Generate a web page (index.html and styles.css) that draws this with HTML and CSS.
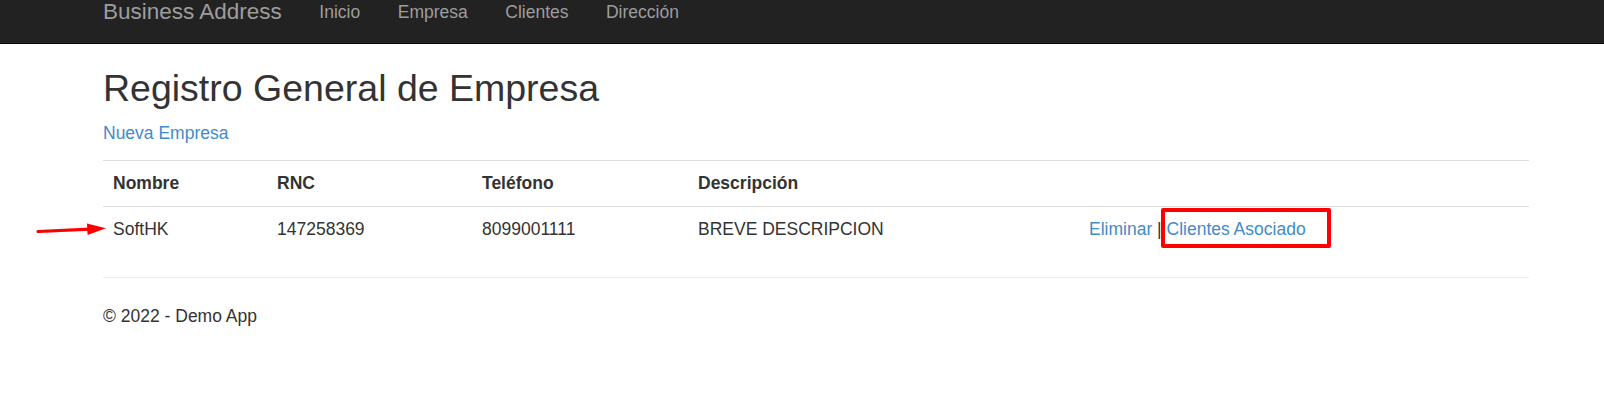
FILE: index.html
```html
<!DOCTYPE html>
<html lang="es">
<head>
<meta charset="utf-8">
<title>Registro General de Empresa - Demo App</title>
<link rel="stylesheet" href="styles.css">
</head>
<body>
<header class="navbar">
  <div class="nav-inner">
    <a class="brand" href="#">Business Address</a>
    <ul class="nav-links">
      <li><a href="#">Inicio</a></li>
      <li><a href="#">Empresa</a></li>
      <li><a href="#">Clientes</a></li>
      <li><a href="#">Dirección</a></li>
    </ul>
  </div>
</header>

<main class="body-content">
  <h2 class="page-title">Registro General de Empresa</h2>
  <p class="new-link"><a href="#">Nueva Empresa</a></p>

  <table class="table">
    <colgroup>
      <col class="c1"><col class="c2"><col class="c3"><col class="c4"><col class="c5">
    </colgroup>
    <tr>
      <th>Nombre</th>
      <th>RNC</th>
      <th>Teléfono</th>
      <th>Descripción</th>
      <th></th>
    </tr>
    <tr>
      <td>SoftHK</td>
      <td>147258369</td>
      <td>8099001111</td>
      <td>BREVE DESCRIPCION</td>
      <td><a href="#">Eliminar</a> | <a href="#">Clientes Asociado</a></td>
    </tr>
  </table>

  <hr class="footer-rule">
  <footer class="footer">
    <p>© 2022 - Demo App</p>
  </footer>
</main>

<svg class="annot-arrow" width="84" height="30" viewBox="0 0 84 30" aria-hidden="true">
  <path d="M8 16.5 L60 14.2" stroke="#f00" stroke-width="3.2" stroke-linecap="round" fill="none"/>
  <path d="M57 8.5 L76 13.2 L57.6 20 Z" fill="#f00"/>
</svg>
<div class="annot-box"></div>
</body>
</html>
```

FILE: styles.css
```css
* { box-sizing: border-box; }

html, body {
  margin: 0;
  padding: 0;
  background: #fff;
}

body {
  position: relative;
  font-family: "Liberation Sans", Arial, Helvetica, sans-serif;
  font-size: 17.5px;
  line-height: 25px;
  color: #333;
}

a {
  color: #428bca;
  text-decoration: none;
}

/* ---------- navbar ---------- */
.navbar {
  height: 44px;
  background: #222;
  border-bottom: 1px solid #080808;
}

.nav-inner {
  display: flex;
  align-items: flex-start;
  padding-left: 103px;
  padding-top: 1px;
}

.brand {
  font-size: 22.5px;
  line-height: 22px;
  color: #9d9d9d;
  margin-right: 18.75px;
}

.nav-links {
  display: flex;
  margin: 0;
  padding: 0;
  list-style: none;
}

.nav-links a {
  display: block;
  padding: 0 18.75px;
  font-size: 17.5px;
  line-height: 22px;
  color: #9d9d9d;
}

/* ---------- body ---------- */
.body-content {
  padding: 0 75px 0 103px;
}

.page-title {
  margin: 23.5px 0 0;
  font-size: 37.5px;
  line-height: 41.25px;
  font-weight: 400;
  color: #333;
}

.new-link {
  margin: 12.5px 0 0;
}

.table {
  width: 100%;
  margin-top: 14px;
  border-collapse: collapse;
  border-spacing: 0;
}

.c1 { width: 164px; }
.c2 { width: 205px; }
.c3 { width: 216px; }
.c4 { width: 391px; }

.table th,
.table td {
  padding: 10px;
  text-align: left;
  vertical-align: top;
  border-top: 1px solid #ddd;
  line-height: 25px;
}

.table th {
  font-weight: 700;
}

.footer-rule {
  margin: 25px 0 0;
  border: 0;
  border-top: 1px solid #eee;
  height: 0;
}

.footer p {
  margin: 26px 0 0;
}

/* ---------- annotations ---------- */
.annot-arrow {
  position: absolute;
  left: 30px;
  top: 215px;
}

.annot-box {
  position: absolute;
  left: 1161px;
  top: 208px;
  width: 170px;
  height: 40px;
  border: 4px solid #f00;
  border-radius: 2px;
}
```
